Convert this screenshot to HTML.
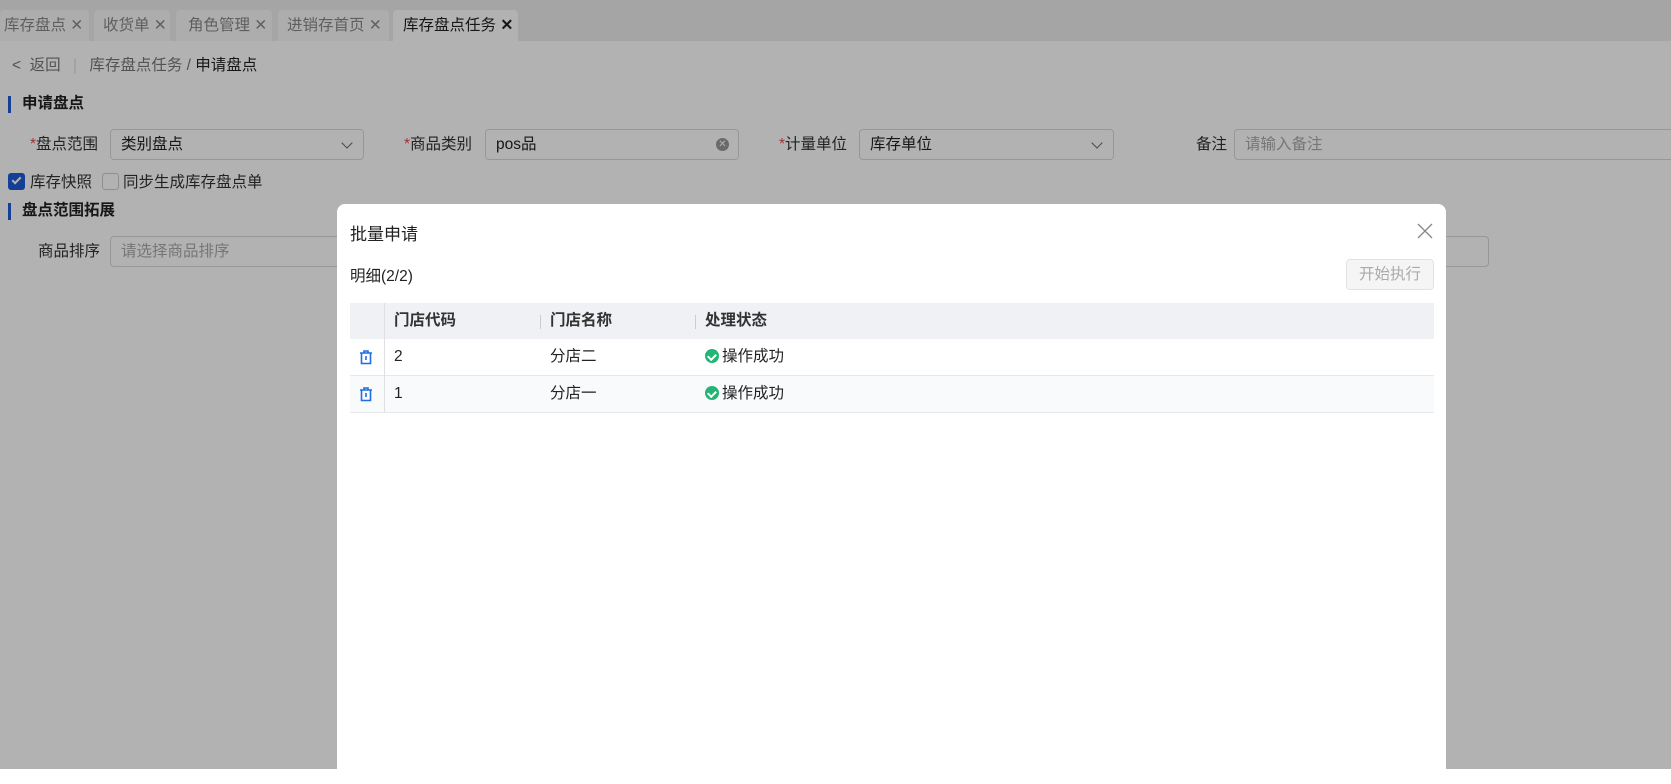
<!DOCTYPE html>
<html><head><meta charset="utf-8"><style>
*{box-sizing:border-box;margin:0;padding:0}
body{width:1671px;height:769px;overflow:hidden;position:relative;background:#fff;font-family:"Liberation Sans","Noto Sans CJK SC",sans-serif;font-size:14px;color:#222}
.abs{position:absolute}
.tabbar{left:0;top:0;width:1671px;height:41px;background:#ededed}
.tab{top:10px;height:31px;background:#f8f8f8;border-radius:4px 4px 0 0;color:#888;font-size:15.5px;line-height:31px;padding-left:4px}
.tab.act{background:#fff;color:#222}
.inp{height:31px;border:1px solid #d9d9d9;border-radius:4px;background:#fff;font-size:15.5px;line-height:29px;padding-left:10px}
.lbl{font-size:15.5px;color:#333;line-height:31px}
.req{color:#e34d4d}
.sec{font-weight:bold;font-size:15.5px;padding-left:14px;line-height:18px}
.sec:before{content:"";position:absolute;left:0;top:1px;width:3px;height:17px;background:#1f5bd6}
.chev{position:absolute;right:12px;top:9px;width:8px;height:8px;border-right:1.5px solid #666;border-bottom:1.5px solid #666;transform:rotate(45deg)}
.mask{left:0;top:0;width:1671px;height:769px;background:rgba(0,0,0,.3)}
.modal{left:337px;top:204px;width:1109px;height:580px;background:#fff;border-radius:8px}
.th{position:absolute;top:0;height:36px;line-height:36px;font-weight:bold;font-size:15.5px;color:#333}
.td{position:absolute;line-height:36px;font-size:15.5px;color:#222}
.sep{position:absolute;top:12px;width:1px;height:14px;background:#ccc}
.ok{display:inline-block;width:14px;height:14px;border-radius:50%;background:#22b573;vertical-align:-2px;margin-right:3px;position:relative}
.ok:after{content:"";position:absolute;left:4px;top:2.5px;width:3.5px;height:6px;border-right:2px solid #fff;border-bottom:2px solid #fff;transform:rotate(45deg)}
</style></head><body>
<div class="abs tabbar"></div>
<div class="abs tab" style="left:0;width:89px">库存盘点 ✕</div>
<div class="abs tab" style="left:94px;width:76px;padding-left:9px">收货单 ✕</div>
<div class="abs tab" style="left:176px;width:96px;padding-left:12px">角色管理 ✕</div>
<div class="abs tab" style="left:278px;width:111px;padding-left:9px">进销存首页 ✕</div>
<div class="abs tab act" style="left:393px;width:125px;padding-left:10px">库存盘点任务 <b>✕</b></div>

<div class="abs" style="left:12px;top:56px;font-size:15.5px;line-height:20px;color:#777">&lt;&nbsp; 返回 <span style="color:#ddd;margin:0 8px">|</span> 库存盘点任务 / <span style="color:#222">申请盘点</span></div>

<div class="abs sec" style="left:8px;top:95px">申请盘点</div>
<div class="abs lbl" style="left:30px;top:129px"><span class="req">*</span>盘点范围</div>
<div class="abs inp" style="left:110px;top:129px;width:254px">类别盘点<span class="chev"></span></div>
<div class="abs lbl" style="left:404px;top:129px"><span class="req">*</span>商品类别</div>
<div class="abs inp" style="left:485px;top:129px;width:254px">pos品<span style="position:absolute;right:9px;top:8px;width:13px;height:13px;border-radius:50%;background:#999;color:#fff;font-size:10px;line-height:13px;text-align:center">✕</span></div>
<div class="abs lbl" style="left:779px;top:129px"><span class="req">*</span>计量单位</div>
<div class="abs inp" style="left:859px;top:129px;width:255px">库存单位<span class="chev"></span></div>
<div class="abs lbl" style="left:1196px;top:129px">备注</div>
<div class="abs inp" style="left:1234px;top:129px;width:450px;color:#aaa">请输入备注</div>

<div class="abs" style="left:8px;top:173px;width:17px;height:17px;border-radius:3px;background:#1f5bd6"><div style="position:absolute;left:5.5px;top:2px;width:5px;height:9px;border-right:2px solid #fff;border-bottom:2px solid #fff;transform:rotate(45deg)"></div></div>
<div class="abs lbl" style="left:30px;top:167px">库存快照</div>
<div class="abs" style="left:102px;top:173px;width:17px;height:17px;border-radius:3px;border:1px solid #ccc;background:#fff"></div>
<div class="abs lbl" style="left:123px;top:167px">同步生成库存盘点单</div>
<div class="abs sec" style="left:8px;top:202px">盘点范围拓展</div>
<div class="abs lbl" style="left:38px;top:236px">商品排序</div>
<div class="abs inp" style="left:110px;top:236px;width:1379px;color:#aaa">请选择商品排序</div>

<div class="abs mask"></div>
<div class="abs modal">
 <div class="abs" style="left:13px;top:16px;font-size:17px;color:#222">批量申请</div>
 <svg class="abs" style="left:1080px;top:19px" width="16" height="16"><path d="M1 1L15 15M15 1L1 15" stroke="#888" stroke-width="1.3"/></svg>
 <div class="abs" style="left:13px;top:60px;font-size:15.5px">明细(2/2)</div>
 <div class="abs" style="left:1009px;top:55px;width:88px;height:31px;border:1px solid #e2e2e2;border-radius:4px;background:#f5f5f5;color:#aaa;font-size:15.5px;line-height:29px;text-align:center">开始执行</div>
 <div class="abs" style="left:13px;top:99px;width:1084px;height:110px">
  <div class="abs" style="left:0;top:0;width:1084px;height:36px;background:#f0f1f4"></div>
  <div class="abs" style="left:0;top:36px;width:1084px;height:37px;border-bottom:1px solid #e8e8e8"></div>
  <div class="abs" style="left:0;top:73px;width:1084px;height:37px;background:#f9fafb;border-bottom:1px solid #e8e8e8"></div>
  <div class="abs" style="left:34px;top:0;width:1px;height:110px;background:#e0e0e0"></div>
  <div class="th" style="left:44px">门店代码</div><div class="sep" style="left:190px"></div>
  <div class="th" style="left:200px">门店名称</div><div class="sep" style="left:345px"></div>
  <div class="th" style="left:355px">处理状态</div>
  <svg class="abs" style="left:8px;top:46px" width="16" height="16"><path d="M2 4H14M6 4V2H10V4M3.5 4V14.5H12.5V4M8 7V11" stroke="#1f6fe0" stroke-width="1.6" fill="none"/></svg>
  <svg class="abs" style="left:8px;top:83px" width="16" height="16"><path d="M2 4H14M6 4V2H10V4M3.5 4V14.5H12.5V4M8 7V11" stroke="#1f6fe0" stroke-width="1.6" fill="none"/></svg>
  <div class="td" style="left:44px;top:36px">2</div><div class="td" style="left:200px;top:36px">分店二</div><div class="td" style="left:355px;top:36px"><span class="ok"></span>操作成功</div>
  <div class="td" style="left:44px;top:73px">1</div><div class="td" style="left:200px;top:73px">分店一</div><div class="td" style="left:355px;top:73px"><span class="ok"></span>操作成功</div>
 </div>
</div>
</body></html>
